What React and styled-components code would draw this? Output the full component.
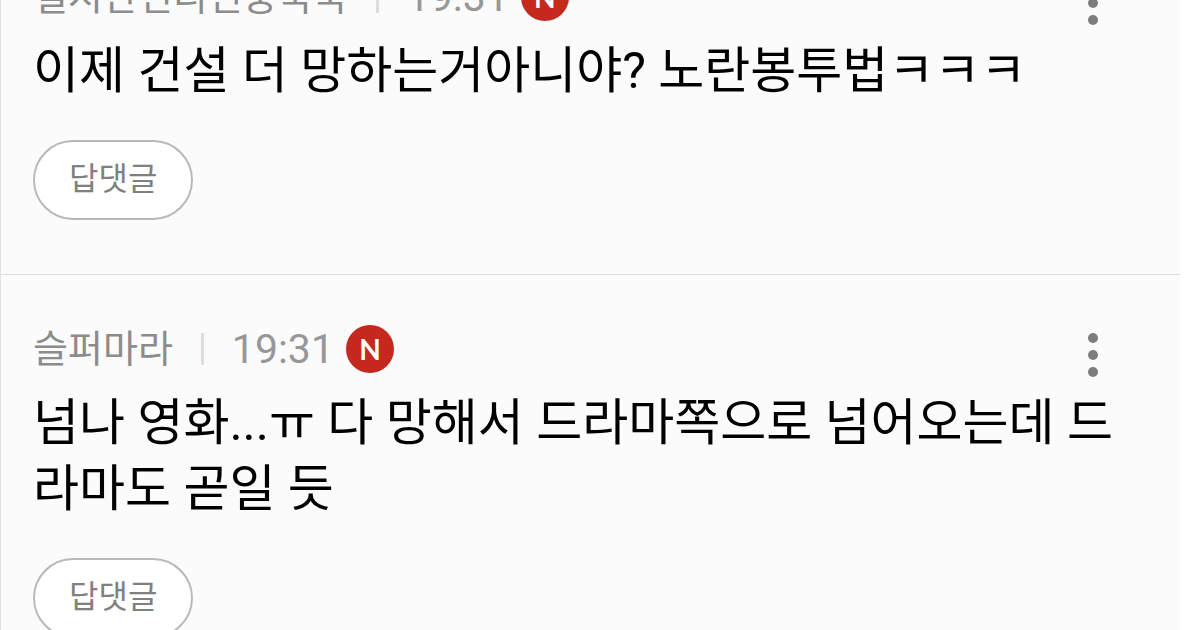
import React from "react";
import styled, { createGlobalStyle } from "styled-components";

const comments = [
  {
    id: 1,
    nickname: "열시간전디진중국국",
    time: "19:31",
    text: "이제 건설 더 망하는거아니야? 노란봉투법ㅋㅋㅋ",
  },
  {
    id: 2,
    nickname: "슬퍼마라",
    time: "19:31",
    text: "넘나 영화...ㅠ 다 망해서 드라마쪽으로 넘어오는데 드라마도 곧일 듯",
  },
];

function CommentItem({ nickname, time, text }) {
  return (
    <Item>
      <Meta>
        <Nickname>{nickname}</Nickname>
        <Bar />
        <Time>{time}</Time>
        <NewBadge>N</NewBadge>
        <MoreButton type="button" aria-label="더보기">
          <Dot />
          <Dot />
          <Dot />
        </MoreButton>
      </Meta>
      <Text>{text}</Text>
      <ReplyButton type="button">답댓글</ReplyButton>
    </Item>
  );
}

function App() {
  return (
    <>
      <GlobalStyle />
      <Viewport>
        <CommentList>
          {comments.map((comment) => (
            <CommentItem key={comment.id} {...comment} />
          ))}
        </CommentList>
      </Viewport>
    </>
  );
}

export default App;

const GlobalStyle = createGlobalStyle`
  * {
    box-sizing: border-box;
  }

  body {
    margin: 0;
    background: #fff;
    font-family: Roboto, "Noto Sans CJK KR", sans-serif;
  }

  button {
    font-family: inherit;
    cursor: pointer;
  }
`;

const Viewport = styled.main`
  height: 100vh;
  padding-right: 20px;
  overflow: hidden;
`;

// The list is scrolled part way into its first comment.
const CommentList = styled.ul`
  margin: -77px 0 0;
  padding: 0;
  list-style: none;
  background: #fbfbfb;
  border-left: 1px solid #e2e2e2;
`;

const Item = styled.li`
  padding: 50px 66px 54px 32px;
  border-bottom: 1px solid #dcdcdc;
`;

const Meta = styled.div`
  display: flex;
  align-items: center;
  height: 48px;
  color: #8c8c8c;
  font-size: 38px;
  line-height: 48px;
`;

const Nickname = styled.span`
  white-space: nowrap;
`;

const Bar = styled.span`
  width: 3px;
  height: 32px;
  margin: 0 28px;
  background: #dedede;
`;

const Time = styled.span`
  color: #979797;
  font-size: 41px;
`;

const NewBadge = styled.span`
  display: flex;
  align-items: center;
  justify-content: center;
  width: 48px;
  height: 48px;
  margin-left: 12px;
  border-radius: 50%;
  background: #c5281c;
  color: #fff;
  font-family: Lato, sans-serif;
  font-size: 28px;
  font-weight: 700;
`;

const MoreButton = styled.button`
  display: flex;
  flex-direction: column;
  align-items: center;
  gap: 7px;
  margin-left: auto;
  padding: 12px 16px 0;
  border: none;
  background: none;
`;

const Dot = styled.span`
  width: 10px;
  height: 10px;
  border-radius: 50%;
  background: #7d7d7d;
`;

const Text = styled.p`
  margin: 17px 0 36px;
  color: #000;
  font-size: 50px;
  line-height: 66px;
  word-break: break-all;
`;

const ReplyButton = styled.button`
  display: block;
  height: 80px;
  padding: 0 34px 2px;
  border: 2px solid #b9b9b9;
  border-radius: 40px;
  background: #fff;
  color: #808080;
  font-size: 32px;
  line-height: 48px;
`;
